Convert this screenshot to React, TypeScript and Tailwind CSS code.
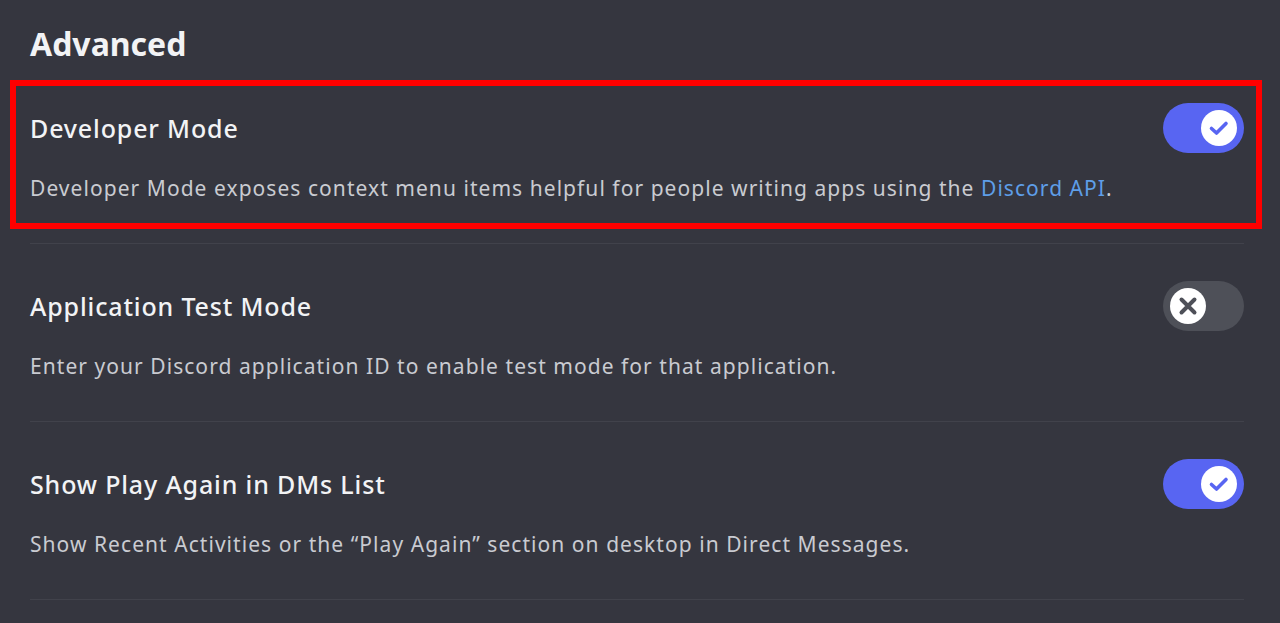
import React from 'react';

type Setting = {
  title: string;
  on: boolean;
  desc: React.ReactNode;
  highlight?: boolean;
};

const Toggle = ({ on }: { on: boolean }) => (
  <div
    className={
      on
        ? 'w-[81px] h-[50px] rounded-full bg-[#5865f2] flex items-center justify-end px-[7px] shrink-0'
        : 'w-[81px] h-[50px] rounded-full bg-[#4e5058] flex items-center justify-start px-[7px] shrink-0'
    }
  >
    <div className="w-[36px] h-[36px] rounded-full bg-white flex items-center justify-center">
      {on ? (
        <svg viewBox="0 0 24 24" className="w-[24px] h-[24px]">
          <path d="M4.5 12.5 L9.5 17 L19 7.5" fill="none" stroke="#5865f2" strokeWidth="3.6" strokeLinecap="round" strokeLinejoin="round" />
        </svg>
      ) : (
        <svg viewBox="0 0 24 24" className="w-[24px] h-[24px]">
          <path d="M5.5 5.5 L18.5 18.5 M18.5 5.5 L5.5 18.5" fill="none" stroke="#4e5058" strokeWidth="4" strokeLinecap="round" />
        </svg>
      )}
    </div>
  </div>
);

const settings: Setting[] = [
  {
    title: 'Developer Mode',
    on: true,
    highlight: true,
    desc: (
      <>
        Developer Mode exposes context menu items helpful for people writing apps using the{' '}
        <span className="text-[#5e9ee8]">Discord API</span>.
      </>
    ),
  },
  {
    title: 'Application Test Mode',
    on: false,
    desc: 'Enter your Discord application ID to enable test mode for that application.',
  },
  {
    title: 'Show Play Again in DMs List',
    on: true,
    desc: 'Show Recent Activities or the \u201cPlay Again\u201d section on desktop in Direct Messages.',
  },
];

export default function App() {
  return (
    <div className="w-[1280px] h-[623px] overflow-hidden bg-[#35363f] pl-[30px] pr-[36px] pt-[26px] font-['Noto_Sans',sans-serif]">
      <h1 className="text-[32px] leading-[36px] font-bold text-[#f2f3f5] mb-[4px]">Advanced</h1>
      {settings.map((s) => (
        <div key={s.title} className="relative pt-[37px] pb-[41px] border-b border-[#41424b]">
          <div className="flex items-center justify-between h-[50px]">
            <div className="text-[25px] leading-[30px] font-medium tracking-[0.85px] text-[#f2f3f5]">{s.title}</div>
            <Toggle on={s.on} />
          </div>
          <div className="mt-[21px] text-[21px] leading-[28px] tracking-[1.05px] text-[#c9cbd1]">{s.desc}</div>
          {s.highlight && (
            <div className="absolute -left-[20px] -right-[18px] top-[14px] bottom-[14px] border-[6px] border-[#ff0000] pointer-events-none" />
          )}
        </div>
      ))}
    </div>
  );
}
